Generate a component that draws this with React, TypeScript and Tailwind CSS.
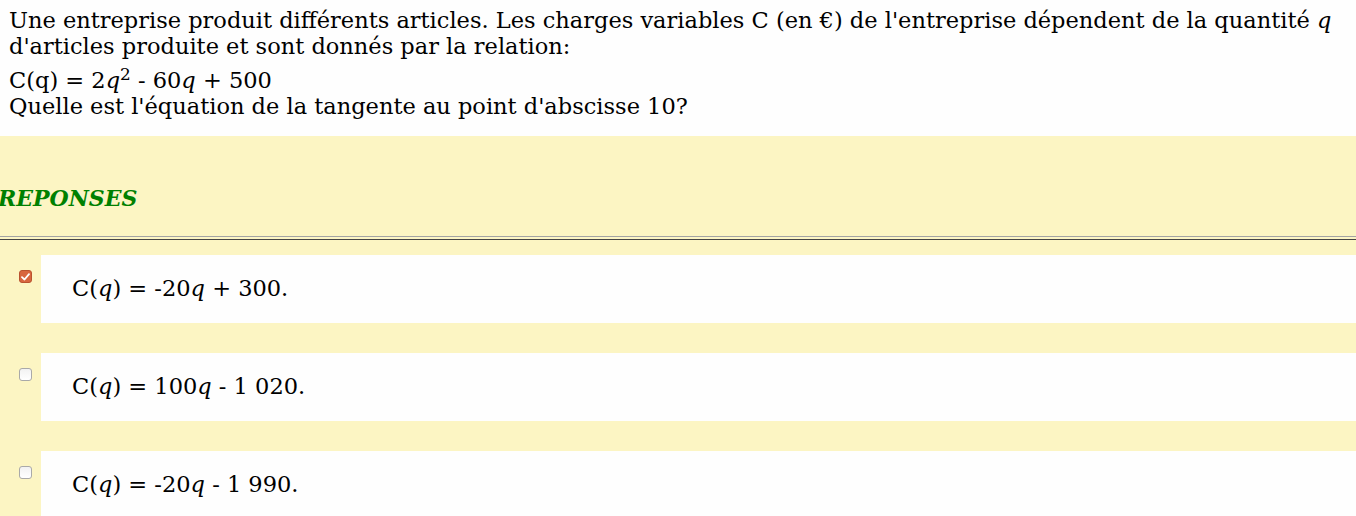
import React from 'react';

interface Answer {
  id: number;
  coef: string;
  rest: string;
  checked: boolean;
}

const answers: Answer[] = [
  { id: 1, coef: '-20', rest: ' + 300.', checked: true },
  { id: 2, coef: '100', rest: ' - 1 020.', checked: false },
  { id: 3, coef: '-20', rest: ' - 1 990.', checked: false },
];

const Q: React.FC = () => <i className="italic">q</i>;

const CheckBox: React.FC<{ checked: boolean }> = ({ checked }) =>
  checked ? (
    <div className="w-[13px] h-[13px] rounded-[3px] bg-[#d8663f] border border-[#b9532f] flex items-center justify-center">
      <svg width="9" height="8" viewBox="0 0 9 8">
        <path d="M1 4.2 L3.5 6.5 L8 1.2" fill="none" stroke="#fff" strokeWidth="1.8" strokeLinecap="round" strokeLinejoin="round" />
      </svg>
    </div>
  ) : (
    <div className="w-[13px] h-[13px] rounded-[3px] bg-gradient-to-b from-[#f2f2f2] to-white border border-[#a9a9a9]" />
  );

export default function App() {
  return (
    <div className="w-[1356px] h-[516px] overflow-hidden bg-[#fefefe] font-['DejaVu_Serif',serif] text-[22.5px] text-black">
      {/* énoncé */}
      <div className="px-[9px] pt-[7px] h-[136px] leading-[26px]">
        <p>
          Une entreprise produit différents articles. Les charges variables C (en €) de l'entreprise dépendent de la quantité <Q />
          <br />
          d'articles produite et sont donnés par la relation:
        </p>
        <p className="mt-[8px]">
          C(q) = 2<Q />
          <sup>2</sup> - 60<Q /> + 500
        </p>
        <p>Quelle est l'équation de la tangente au point d'abscisse 10?</p>
      </div>

      {/* réponses */}
      <div className="bg-[#fcf5c3]">
        <h3 className="pt-[49px] pb-[25px] -ml-[2px] text-[22px] leading-[26px] font-bold italic text-[#008000]">
          REPONSES
        </h3>
        <div className="h-[4px] border-t border-[#a3a3a3] border-b border-b-[#454545]" />
        <div className="pt-[15px] flex flex-col gap-[30px]">
          {answers.map(a => (
            <div key={a.id} className="flex">
              <div className="w-[41px] shrink-0 pl-[19px] pt-[15px]">
                <CheckBox checked={a.checked} />
              </div>
              <div className="flex-1 h-[68px] bg-[#fefefe] pl-[31px] flex items-center">
                <span>
                  C(<Q />) = {a.coef}
                  <Q />
                  {a.rest}
                </span>
              </div>
            </div>
          ))}
        </div>
      </div>
    </div>
  );
}
